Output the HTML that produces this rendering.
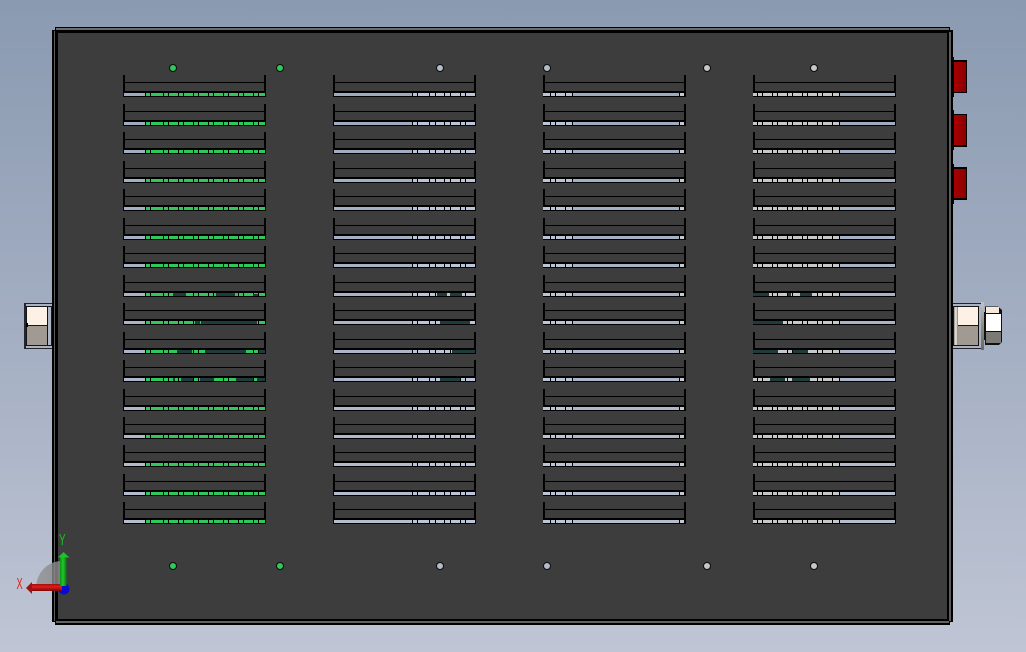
<!DOCTYPE html>
<html><head><meta charset="utf-8"><style>
html,body{margin:0;padding:0;width:1026px;height:652px;overflow:hidden;background:linear-gradient(180deg,#8a9ab0 0%,#a3aec2 50%,#bfc5d4 100%)}
svg{display:block;position:absolute;left:0;top:0}
text{font-family:"Liberation Sans",sans-serif}
</style></head><body>
<svg width="1026" height="652" viewBox="0 0 1026 652" xmlns="http://www.w3.org/2000/svg">
<defs>
<linearGradient id="tri" x1="0" y1="0" x2="1" y2="0"><stop offset="0" stop-color="#8e8e8e" stop-opacity=".75"/><stop offset="1" stop-color="#8a8a8a" stop-opacity=".85"/></linearGradient>
<linearGradient id="gs" x1="0" y1="0" x2="1" y2="0"><stop offset="0" stop-color="#0f8f17"/><stop offset=".45" stop-color="#1fc82a"/><stop offset="1" stop-color="#0b7a12"/></linearGradient>
<linearGradient id="rs" x1="0" y1="0" x2="0" y2="1"><stop offset="0" stop-color="#a01010"/><stop offset=".4" stop-color="#e01c1c"/><stop offset="1" stop-color="#7a0808"/></linearGradient>
<linearGradient id="rt" x1="0" y1="0" x2="1" y2="0"><stop offset="0" stop-color="#a80000"/><stop offset="1" stop-color="#8a0000"/></linearGradient>
<linearGradient id="sh" x1="0" y1="0" x2="1" y2="0"><stop offset="0" stop-color="#8e8c86"/><stop offset=".5" stop-color="#f4f0ea"/><stop offset="1" stop-color="#77756f"/></linearGradient>
<linearGradient id="wa" x1="0" y1="0" x2="0" y2="1"><stop offset="0" stop-color="#c8c4bc"/><stop offset=".5" stop-color="#8e8c86"/><stop offset="1" stop-color="#6a6862"/></linearGradient>
<g id="f" shape-rendering="crispEdges">
<rect x="123" y="91" width="143" height="6" fill="#000"/>
<rect x="123" y="75" width="2" height="22" fill="#000"/>
<rect x="264" y="75" width="2" height="22" fill="#000"/>
<rect x="124" y="82" width="141" height="1" fill="#000"/>
</g>
<g id="r" shape-rendering="crispEdges">
<use href="#f"/><use href="#f" x="210"/><use href="#f" x="420"/><use href="#f" x="630"/>
<!-- column 1 -->
<rect x="124" y="93" width="21" height="3"/>
<path fill="#2fc95a" d="M146 93h4v3h-4zM151 93h12v3h-12zM164 93h4v3h-4zM169 93h9v3h-9zM179 93h4v3h-4zM184 93h9v3h-9zM194 93h4v3h-4zM199 93h9v3h-9zM209 93h4v3h-4zM214 93h9v3h-9zM224 93h4v3h-4zM229 93h9v3h-9zM239 93h4v3h-4zM244 93h9v3h-9zM254 93h4v3h-4zM259 93h6v3h-6z"/>
<!-- column 2 -->
<rect x="334" y="93" width="78" height="3"/>
<path fill="#bcc5d8" d="M413 93h4v3h-4zM418 93h11v3h-11zM430 93h5v3h-5zM436 93h8v3h-8zM445 93h5v3h-5zM451 93h9v3h-9zM461 93h4v3h-4zM466 93h9v3h-9z"/>
<!-- column 3 -->
<rect x="573" y="93" width="106" height="3"/>
<path fill="#bcc5d8" d="M543 93h7v3h-7zM551 93h4v3h-4zM556 93h9v3h-9zM566 93h6v3h-6z"/>
<path fill="#c6c8ca" d="M680 93h4v3h-4z"/>
<!-- column 4 -->
<rect x="840" y="93" width="55" height="3"/>
<path fill="#c6c8ca" d="M753 93h4v3h-4zM758 93h4v3h-4zM763 93h9v3h-9zM773 93h4v3h-4zM778 93h9v3h-9zM788 93h4v3h-4zM793 93h9v3h-9zM803 93h4v3h-4zM808 93h9v3h-9zM818 93h4v3h-4zM823 93h9v3h-9zM833 93h6v3h-6z"/>
</g>
</defs>

<!-- panel -->
<g shape-rendering="crispEdges">
<rect x="55" y="27" width="895" height="598" fill="#000"/>
<rect x="52" y="30" width="901" height="592" fill="#000"/>
<rect x="54" y="31" width="1" height="590" fill="#5c5c5c"/>
<rect x="949" y="32" width="2" height="589" fill="#5c5c5c"/>
<rect x="56" y="28" width="893" height="2" fill="#6d6d6d"/>
<rect x="56" y="621" width="893" height="2" fill="#626262"/>
<rect x="58" y="33" width="889" height="586" fill="#3d3d3d"/>
</g>

<!-- red tabs -->
<g shape-rendering="crispEdges">
<rect x="953" y="57" width="1" height="40" fill="#000"/>
<rect x="953" y="110" width="1" height="40" fill="#000"/>
<rect x="953" y="164" width="1" height="40" fill="#000"/>
<rect x="954" y="60" width="13" height="33" fill="#000"/>
<rect x="954" y="62" width="12" height="30" fill="url(#rt)"/>
<rect x="954" y="114" width="13" height="33" fill="#000"/>
<rect x="954" y="115" width="12" height="30" fill="url(#rt)"/>
<rect x="954" y="167" width="13" height="33" fill="#000"/>
<rect x="954" y="169" width="12" height="29" fill="url(#rt)"/>
</g>

<!-- left clamp -->
<g shape-rendering="crispEdges">
<rect x="24" y="303" width="28" height="46" fill="#23262c"/>
<rect x="26" y="304" width="26" height="44" fill="#a9b3c4"/>
<rect x="26" y="306" width="26" height="40" fill="#14161a"/>
<rect x="27" y="307" width="20" height="18" fill="#fdf1e6"/>
<rect x="27" y="326" width="20" height="19" fill="#a09a92"/>
<rect x="26" y="323" width="2" height="4" fill="#000"/>
<rect x="47" y="307" width="1" height="38" fill="#111"/>
<rect x="48" y="307" width="3" height="38" fill="#aeb7c6"/>
<rect x="27" y="345" width="25" height="1" fill="#14161a"/>
</g>

<!-- right clamp -->
<g shape-rendering="crispEdges">
<rect x="953" y="303" width="29" height="46" fill="#23262c"/>
<rect x="953" y="304" width="28" height="44" fill="#a9b3c4"/>
<rect x="953" y="306" width="26" height="40" fill="#14161a"/>
<rect x="954" y="307" width="4" height="38" fill="url(#sh)"/>
<rect x="958" y="307" width="20" height="18" fill="#fdf1e6"/>
<rect x="958" y="326" width="20" height="19" fill="#a09a92"/>
<rect x="978" y="307" width="1" height="38" fill="#111"/>
<rect x="981" y="302" width="3" height="48" fill="url(#wa)"/>
<rect x="984" y="312" width="1" height="28" fill="#111"/>
</g>
<path d="M985 306.5H998L1002 310V342L999 345H985Z" fill="#111"/>
<g shape-rendering="crispEdges">
<rect x="986" y="307" width="13" height="6" fill="#f6e8da"/>
<rect x="986" y="314" width="15" height="17" fill="#fff"/>
<rect x="986" y="332" width="15" height="11" fill="#7c7a74"/>
</g>

<!-- rows -->
<g fill="#9eabbf"><use href="#r"/></g>
<g fill="#a0acc0"><use href="#r" y="29"/></g>
<g fill="#a1adc1"><use href="#r" y="57"/></g>
<g fill="#a3afc2"><use href="#r" y="86"/></g>
<g fill="#a4b0c3"><use href="#r" y="114"/></g>
<g fill="#a6b1c4"><use href="#r" y="143"/></g>
<g fill="#a7b2c5"><use href="#r" y="171"/></g>
<g fill="#a9b3c6"><use href="#r" y="200"/></g>
<g fill="#aab4c7"><use href="#r" y="228"/></g>
<g fill="#acb6c8"><use href="#r" y="257"/></g>
<g fill="#adb7c9"><use href="#r" y="285"/></g>
<g fill="#afb8ca"><use href="#r" y="314"/></g>
<g fill="#b0b9cb"><use href="#r" y="342"/></g>
<g fill="#b2bbcc"><use href="#r" y="370"/></g>
<g fill="#b3bccd"><use href="#r" y="399"/></g>
<g fill="#b5bdce"><use href="#r" y="427"/></g>

<!-- dark patches -->
<g fill="#1f3b3c" shape-rendering="crispEdges">
<path d="M173 293h13v3h-13zM216 293h19v3h-19zM253 294h5v2h-5z"/>
<path d="M195 321h5v3h-5zM201 321h49v3h-49zM250 321h7v3h-7z"/>
<path d="M177 350h15v3h-15zM205 350h41v3h-41zM259 350h6v3h-6z"/>
<path d="M173 378h2v3h-2zM181 378h12v3h-12zM200 378h14v3h-14zM236 378h17v3h-17zM257 378h8v3h-8z"/>
<path d="M437 293h10v3h-10zM450 293h12v3h-12z"/>
<path d="M440 321h30v3h-30z"/>
<path d="M452 350h23v3h-23z"/>
<path d="M440 378h20v3h-20z"/>
<path d="M753 293h16v3h-16zM788 293h3v3h-3zM800 293h12v3h-12z"/>
<path d="M753 321h30v3h-30z"/>
<path d="M753 350h25v3h-25zM793 350h15v3h-15z"/>
<path d="M770 378h15v3h-15zM792 378h18v3h-18z"/>
</g>

<!-- dots -->
<g stroke="#0c0c0c" stroke-width="1">
<circle cx="173" cy="68" r="3.5" fill="#2fc95a"/>
<circle cx="280" cy="68" r="3.5" fill="#2fc95a"/>
<circle cx="440" cy="68" r="3.5" fill="#b4bccc"/>
<circle cx="547" cy="68" r="3.5" fill="#b4bccc"/>
<circle cx="707" cy="68" r="3.5" fill="#c4c6c8"/>
<circle cx="814" cy="68" r="3.5" fill="#c4c6c8"/>
<circle cx="173" cy="566" r="3.5" fill="#2fc95a"/>
<circle cx="280" cy="566" r="3.5" fill="#2fc95a"/>
<circle cx="440" cy="566" r="3.5" fill="#b4bccc"/>
<circle cx="547" cy="566" r="3.5" fill="#b4bccc"/>
<circle cx="707" cy="566" r="3.5" fill="#c4c6c8"/>
<circle cx="814" cy="566" r="3.5" fill="#c4c6c8"/>
</g>

<!-- triad -->
<path d="M62 588 L36 588 A26 27 0 0 1 62 561 Z" fill="url(#tri)"/>
<circle cx="64" cy="589" r="5.5" fill="#0a0ad0"/>
<path d="M32 584H62V591H32Z" fill="url(#rs)"/>
<path d="M26 588L32 582V594Z" fill="#a01010"/>
<path d="M60 557H66.5V586H60Z" fill="url(#gs)"/>
<path d="M63.5 552L69.5 557.5H58Z" fill="#19c522"/>
<text transform="translate(16.5,589) scale(.58,1)" font-size="16" fill="#f01818">X</text>
<text transform="translate(59,545) scale(.62,1)" font-size="16" fill="#18c020">Y</text>
</svg>
</body></html>
